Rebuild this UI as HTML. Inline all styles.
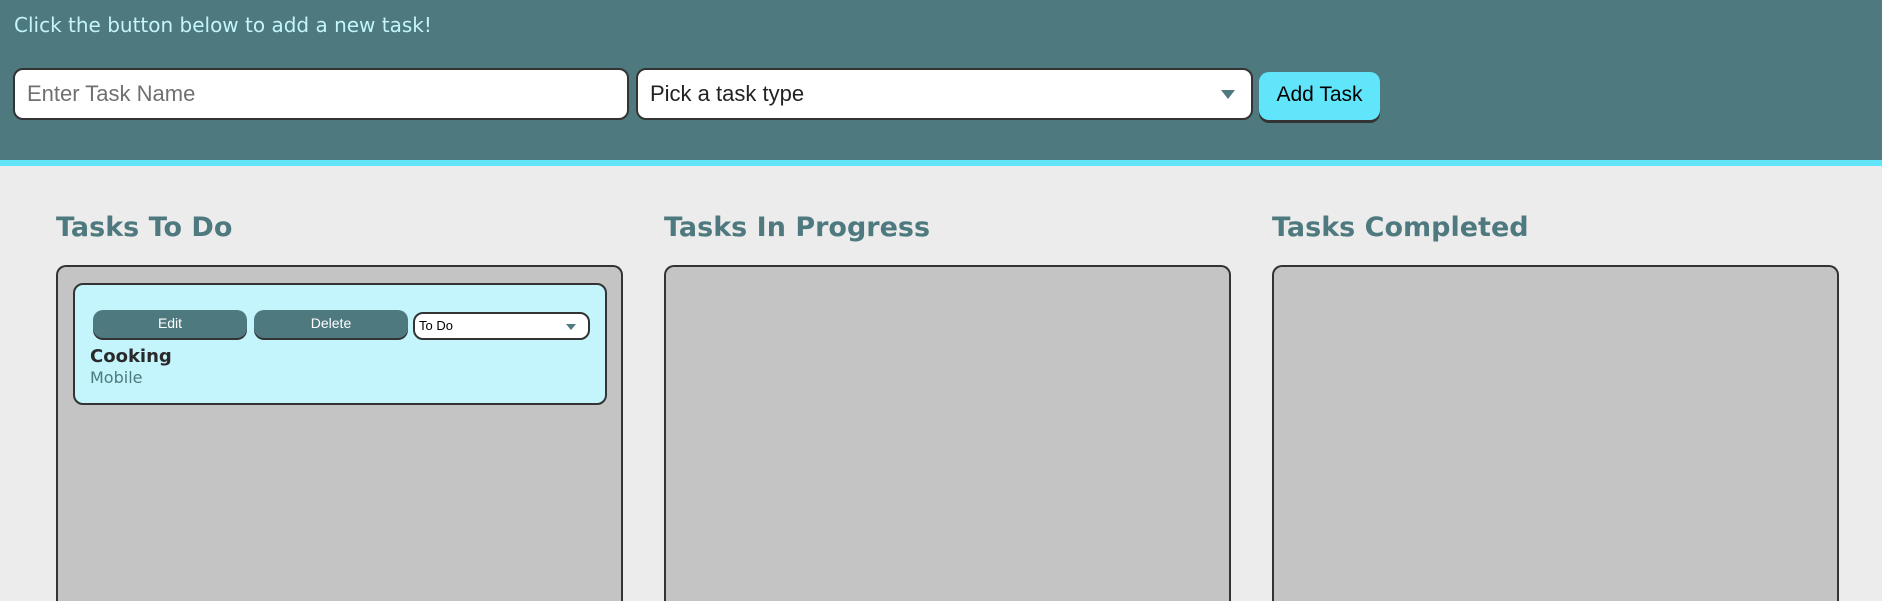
<!DOCTYPE html>
<html style="width:1882px;height:601px;overflow:hidden"><head><style>
*{box-sizing:border-box;margin:0;padding:0}
body{width:1882px;height:601px;overflow:hidden;background:#ececec;font-family:"DejaVu Sans",Verdana,sans-serif;position:relative}
.hdr{position:absolute;left:0;top:0;width:1882px;background:#4e797f;border-bottom:6px solid #61e5fb;height:166px}
.abs{position:absolute}
.hint{left:14px;top:13px;color:#c4f5fc;font-size:20px}
.inp{background:#fff;border:2px solid #333;border-radius:10px;height:52px;top:68px;font-family:"Liberation Sans",sans-serif;font-size:22px;padding-left:12px;line-height:48px}
.tri{position:absolute;width:0;height:0;border-left:7px solid transparent;border-right:7px solid transparent;border-top:9px solid #4e797f}
.add{left:1259px;top:72px;width:121px;height:48px;background:#61e5fb;border-radius:10px;box-shadow:0 3px 0 #333;font-family:"Liberation Sans",sans-serif;font-size:21px;text-align:center;line-height:46px;color:#000}
h2{position:absolute;top:212px;font-size:27px;font-weight:bold;color:#4e797f}
.col{position:absolute;top:265px;height:338px;background:#c4c4c4;border:2px solid #333;border-bottom:none;border-radius:10px 10px 0 0;width:567px}
.card{left:73px;top:283px;width:534px;height:122px;background:#c4f5fc;border:2px solid #333;border-radius:10px}
.btn{top:310px;height:28px;width:154px;background:#4e797f;border-radius:10px;box-shadow:0 2px 0 #333;color:#fff;font-family:"Liberation Sans",sans-serif;font-size:14px;text-align:center;line-height:26px}
</style></head><body>
<div class="hdr"></div>
<div class="abs hint">Click the button below to add a new task!</div>
<div class="abs inp" style="left:13px;width:616px;color:#707070">Enter Task Name</div>
<div class="abs inp" style="left:636px;width:617px;color:#222">Pick a task type<div class="tri" style="right:16px;top:20px"></div></div>
<div class="abs add">Add Task</div>
<h2 style="left:56px">Tasks To Do</h2>
<h2 style="left:664px">Tasks In Progress</h2>
<h2 style="left:1272px">Tasks Completed</h2>
<div class="col" style="left:56px"></div>
<div class="col" style="left:664px"></div>
<div class="col" style="left:1272px"></div>
<div class="abs card"></div>
<div class="abs btn" style="left:93px">Edit</div>
<div class="abs btn" style="left:254px">Delete</div>
<div class="abs" style="left:413px;top:312px;width:177px;height:28px;background:#fff;border:2px solid #333;border-radius:10px;font-family:'Liberation Sans',sans-serif;font-size:13px;line-height:24px;padding-left:4px;color:#000">To Do<div class="tri" style="right:12px;top:10px;border-left-width:5px;border-right-width:5px;border-top-width:6px"></div></div>
<div class="abs" style="left:90px;top:346px;font-size:18px;font-weight:bold;color:#2a2a2a">Cooking</div>
<div class="abs" style="left:90px;top:368px;font-size:16px;color:#4e797f">Mobile</div>
</body></html>
